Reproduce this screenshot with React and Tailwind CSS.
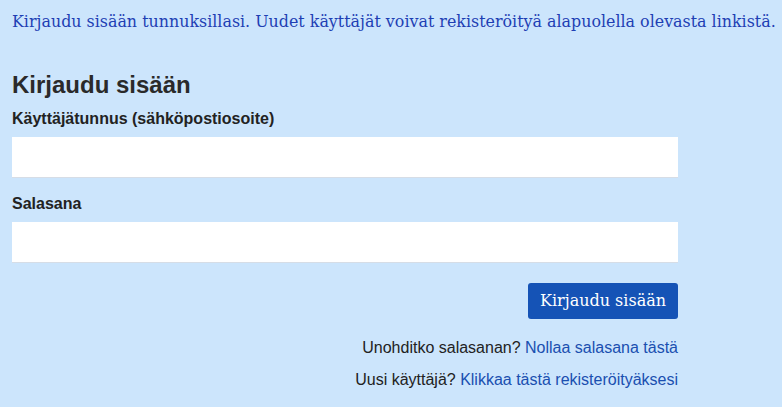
export default function App() {
  return (
    <div className="min-h-[407px] w-full bg-[#cce5fc] pl-[12px] pt-[10px]" style={{ fontFamily: '"Liberation Sans", Arial, sans-serif' }}>
      <p className="text-[15.88px] leading-[24px] text-[#1e3fb4]" style={{ fontFamily: '"DejaVu Serif", serif' }}>
        Kirjaudu sisään tunnuksillasi. Uudet käyttäjät voivat rekisteröityä alapuolella olevasta linkistä.
      </p>
      <div className="w-[666px] pt-[37px]">
        <h2 className="text-[24px] font-bold leading-[28px] text-[#2a2a2a]">Kirjaudu sisään</h2>
        <label className="mt-[10px] block text-[16px] font-bold leading-[20px] text-[#222]">Käyttäjätunnus (sähköpostiosoite)</label>
        <input className="mt-[8px] block h-[41px] w-full border-b border-[#d6dde6] bg-white" type="text" />
        <label className="mt-[16px] block text-[16px] font-bold leading-[20px] text-[#222]">Salasana</label>
        <input className="mt-[8px] block h-[41px] w-full border-b border-[#d6dde6] bg-white" type="password" />
        <div className="mt-[20px] flex justify-end">
          <button className="h-[36px] w-[150px] rounded-[3px] bg-[#1553b6] text-[16px] text-white" style={{ fontFamily: '"DejaVu Serif", serif' }}>
            Kirjaudu sisään
          </button>
        </div>
        <p className="mt-[19px] text-right text-[16px] leading-[20px] text-[#222]">
          Unohditko salasanan? <a className="text-[#1a4fb0]" href="#">Nollaa salasana tästä</a>
        </p>
        <p className="mt-[12px] text-right text-[16px] leading-[20px] text-[#222]">
          Uusi käyttäjä? <a className="text-[#1a4fb0]" href="#">Klikkaa tästä rekisteröityäksesi</a>
        </p>
      </div>
    </div>
  );
}
